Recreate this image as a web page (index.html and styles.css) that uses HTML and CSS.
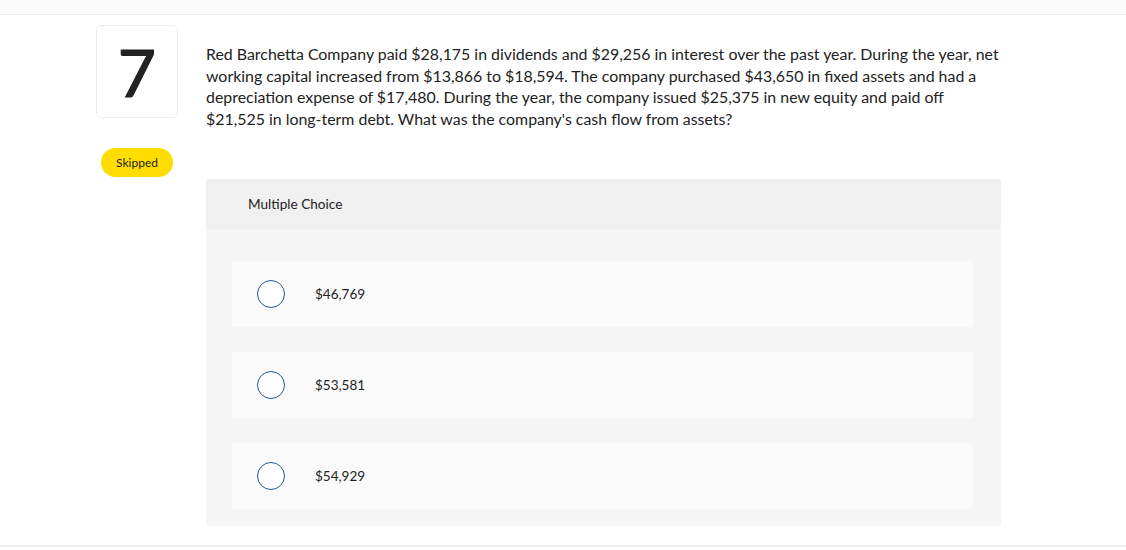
FILE: index.html
```html
<!DOCTYPE html>
<html>
<head>
<meta charset="utf-8">
<link rel="stylesheet" href="styles.css">
</head>
<body>
<div class="topbar"></div>
<div class="main">
  <div class="side">
    <div class="numbox">7</div>
    <div class="pill">Skipped</div>
  </div>
  <div class="content">
    <p class="question">Red Barchetta Company paid $28,175 in dividends and $29,256 in interest over the past year. During the year, net working capital increased from $13,866 to $18,594. The company purchased $43,650 in fixed assets and had a depreciation expense of $17,480. During the year, the company issued $25,375 in new equity and paid off $21,525 in long-term debt. What was the company's cash flow from assets?</p>
    <div class="panel">
      <div class="panel-head">Multiple Choice</div>
      <div class="panel-body">
        <div class="option"><span class="radio"></span><span class="label">$46,769</span></div>
        <div class="option"><span class="radio"></span><span class="label">$53,581</span></div>
        <div class="option"><span class="radio"></span><span class="label">$54,929</span></div>
      </div>
    </div>
  </div>
</div>
<div class="bottomline"></div>
</body>
</html>
```
FILE: styles.css
```css
* { box-sizing: border-box; }
body {
  margin: 0;
  background: #fff;
  font-family: Lato, "Liberation Sans", sans-serif;
  color: #222;
}
.topbar {
  height: 15px;
  background: #fafafa;
  border-bottom: 1px solid #ececec;
}
.main {
  display: flex;
  padding-left: 96px;
  padding-top: 10px;
}
.side {
  width: 82px;
  display: flex;
  flex-direction: column;
  align-items: center;
}
.numbox {
  width: 82px;
  height: 93px;
  border: 1px solid #ececec;
  border-radius: 5px;
  display: flex;
  align-items: center;
  justify-content: center;
  font-size: 66px;
  font-weight: 400;
  -webkit-text-stroke: 1.2px #222;
  color: #222;
  line-height: 1;
}
.pill {
  margin-top: 30px;
  width: 72px;
  height: 29px;
  border-radius: 15px;
  background: #ffdd00;
  font-size: 12px;
  display: flex;
  align-items: center;
  justify-content: center;
  color: #222;
}
.content {
  margin-left: 28px;
  width: 795px;
}
.question {
  margin: 18px 0 0 0;
  font-size: 15.9px;
  line-height: 21.5px;
  color: #222;
}
.panel {
  margin-top: 50px;
  border-radius: 3px;
  overflow: hidden;
}
.panel-head {
  height: 50px;
  background: #f0f0f0;
  padding-left: 42px;
  display: flex;
  align-items: center;
  font-size: 13.6px;
  color: #222;
}
.panel-body {
  background: #f5f5f5;
  padding: 32px 28px 17px 26px;
  display: flex;
  flex-direction: column;
  gap: 25px;
}
.option {
  height: 66px;
  background: #fafafa;
  border-radius: 3px;
  display: flex;
  align-items: center;
  padding-left: 25px;
}
.radio {
  width: 28px;
  height: 28px;
  border-radius: 50%;
  border: 1.5px solid #1f5a96;
  background: #fff;
  flex: none;
}
.label {
  margin-left: 30px;
  font-size: 13.5px;
  color: #222;
}
.bottomline {
  margin-top: 19px;
  height: 2px;
  background: #efefef;
}
```
